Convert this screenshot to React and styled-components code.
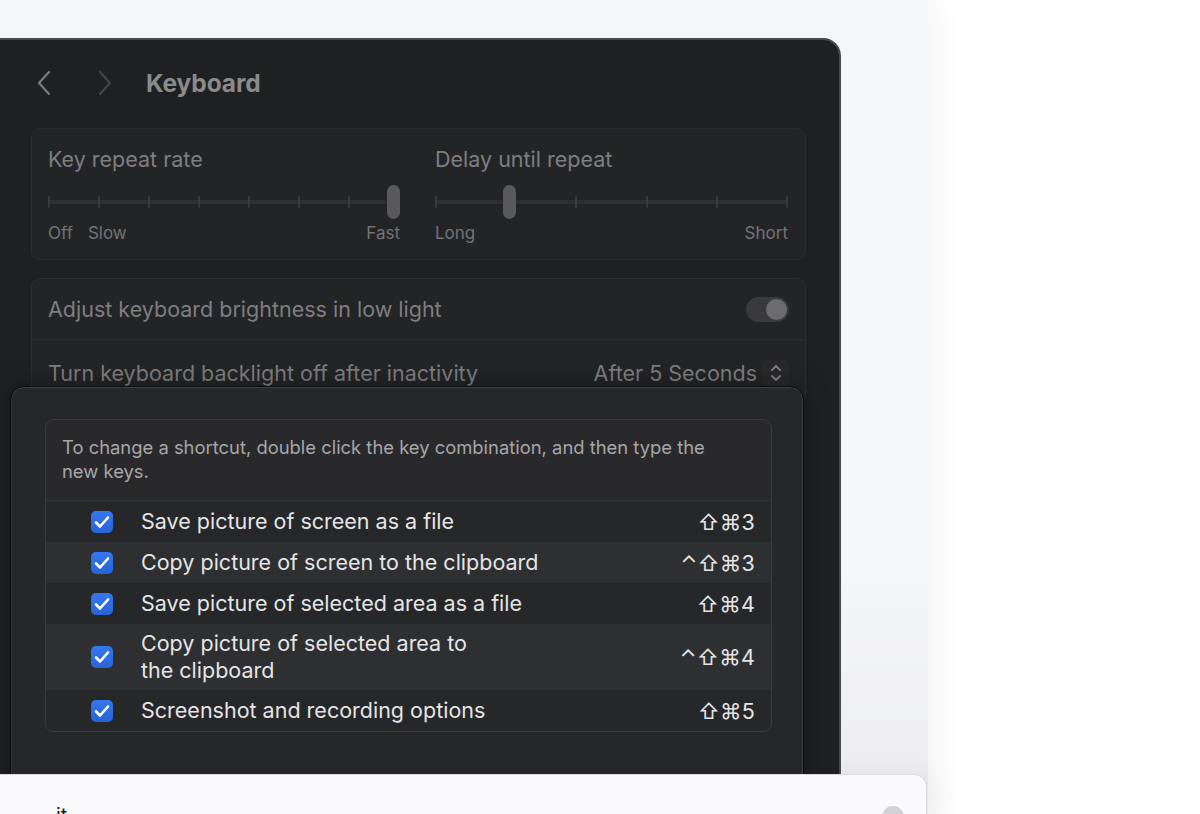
import React from "react";
import styled, { createGlobalStyle } from "styled-components";

const Global = createGlobalStyle`
  html, body { margin: 0; padding: 0; }
  body { width: 1200px; height: 814px; overflow: hidden; background: #ffffff;
    font-family: "Inter", "Noto Sans", "DejaVu Sans", sans-serif; }
  * { box-sizing: border-box; }
`;

const Page = styled.div`
  display: flex;
  width: 1200px;
  height: 814px;
  overflow: hidden;
`;

const LeftPane = styled.div`
  width: 928px;
  flex: none;
  background: linear-gradient(#f5f6f8 70%, #ececee 100%);
  display: flex;
  flex-direction: column;
  padding-top: 38px;
  box-shadow: 6px 0 30px rgba(0, 0, 0, 0.05);
  position: relative;
  z-index: 1;
`;

const RightPane = styled.div`
  flex: 1;
  background: #ffffff;
`;

const Window = styled.div`
  position: relative;
  margin-left: -20px;
  width: 861px;
  height: 736px;
  flex: none;
  background: #1f2022;
  border: 2px solid #48494b;
  border-bottom: none;
  border-radius: 18px 18px 0 0;
  overflow: hidden;
`;

const Toolbar = styled.div`
  display: flex;
  align-items: center;
  height: 88px;
  padding-left: 54px;
  padding-bottom: 2px;
`;

const NavButton = styled.div`
  width: 40px;
  height: 30px;
  display: flex;
  align-items: center;
  margin-right: 21px;
  svg { display: block; }
`;

const Title = styled.div`
  font-size: 24.5px;
  font-weight: 700;
  color: #8a8a8b;
  margin-left: -12px;
  letter-spacing: -0.1px;
`;

const Content = styled.div`
  display: flex;
  flex-direction: column;
  gap: 18px;
  padding: 0 33px 0 49px;
`;

const Group = styled.div`
  background: #232426;
  border: 1px solid #2b2c2e;
  border-radius: 9px;
`;

const SliderGrid = styled.div`
  display: grid;
  grid-template-columns: 352px 353px;
  column-gap: 35px;
  padding: 17px 16px 16px 16px;
`;

const SliderBlock = styled.div`
  display: flex;
  flex-direction: column;
`;

const GroupLabel = styled.div`
  font-size: 21.5px;
  line-height: 26px;
  color: #7e7e80;
`;

const SliderTrackArea = styled.div`
  position: relative;
  height: 40px;
  margin-top: 10px;
  display: flex;
  align-items: center;
`;

const Track = styled.div`
  position: absolute;
  left: 0;
  right: 0;
  top: 18px;
  height: 4px;
  border-radius: 2px;
  background: #2e2f31;
`;

const Ticks = styled.div`
  position: relative;
  width: 100%;
  display: flex;
  justify-content: space-between;
`;

const Tick = styled.span`
  width: 2px;
  height: 12px;
  border-radius: 1px;
  background: #3a3b3d;
`;

const Thumb = styled.div`
  position: absolute;
  top: 3px;
  width: 13px;
  height: 34px;
  border-radius: 7px;
  background: #59595b;
`;

const TickLabels = styled.div`
  display: flex;
  font-size: 17px;
  line-height: 20px;
  color: #737375;
  margin-top: 1px;
`;

const TickLabel = styled.span`
  margin-left: ${(p) => p.$gap || 0}px;
  margin-right: ${(p) => (p.$push ? "auto" : "0")};
`;

const Row = styled.div`
  display: flex;
  align-items: center;
  justify-content: space-between;
  height: ${(p) => p.$h}px;
  padding: 0 16px;
  border-top: ${(p) => (p.$sep ? "1px solid #2b2c2e" : "none")};
`;

const Toggle = styled.div`
  width: 43px;
  height: 25px;
  border-radius: 13px;
  background: #3a3a3c;
  position: relative;
  &::after {
    content: "";
    position: absolute;
    right: 2px;
    top: 2px;
    width: 21px;
    height: 21px;
    border-radius: 50%;
    background: #6c6c6e;
  }
`;

const PopupValue = styled.div`
  display: flex;
  align-items: center;
  gap: 5px;
  font-size: 21.5px;
  color: #7e7e80;
`;

const Stepper = styled.div`
  width: 27px;
  height: 26px;
  border-radius: 6px;
  background: #29292b;
  display: flex;
  align-items: center;
  justify-content: center;
`;

const Sheet = styled.div`
  position: absolute;
  left: 28px;
  top: 346px;
  width: 794px;
  height: 460px;
  background: #262729;
  border: 1px solid #0c0c0d;
  border-radius: 14px 14px 0 0;
  box-shadow: inset 0 1px 0 #404143, inset 1px 0 0 #333436, inset -1px 0 0 #3a3b3d,
    0 0 24px rgba(0, 0, 0, 0.35);
  padding: 32px 31px 0 34px;
`;

const ShortcutBox = styled.div`
  border: 1px solid #3a3b3d;
  border-radius: 9px;
  overflow: hidden;
  background: #29292b;
`;

const Hint = styled.div`
  font-size: 18.4px;
  line-height: 24px;
  color: #a6a6a8;
  padding: 15px 40px 17px 16px;
  border-bottom: 1px solid #333436;
`;

const ShortcutRow = styled.div`
  display: flex;
  align-items: center;
  height: ${(p) => (p.$tall ? 66 : 41)}px;
  padding: 0 16px 0 45px;
  background: ${(p) => (p.$alt ? "#2e2f31" : "#262729")};
`;

const Check = styled.div`
  width: 22px;
  height: 22px;
  flex: none;
  border-radius: 5px;
  background: linear-gradient(#3478f0, #2763d6);
  display: flex;
  align-items: center;
  justify-content: center;
  svg { display: block; }
`;

const ShortcutText = styled.div`
  flex: 1;
  margin-left: 28px;
  font-size: 21.5px;
  line-height: 27px;
  color: #e4e4e6;
`;

const Keys = styled.div`
  font-size: 21.5px;
  color: #e4e4e6;
  font-family: "Inter", "DejaVu Sans", sans-serif;
  letter-spacing: 0.2px;
`;

const BottomCard = styled.div`
  width: 928px;
  height: 60px;
  flex: none;
  margin-left: -1px;
  background: #fafafc;
  border: 1px solid #dcdcde;
  border-radius: 0 13px 0 0;
  display: flex;
  justify-content: space-between;
  padding: 28px 22px 0 56px;
  box-shadow: 10px 0 30px rgba(0, 0, 0, 0.05);
`;

const CardText = styled.div`
  font-size: 20px;
  line-height: 24px;
  color: #1d1d1f;
`;

const CardButton = styled.div`
  width: 22px;
  height: 22px;
  border-radius: 50%;
  background: #d3d3d5;
  margin-top: 3px;
`;

const Chevron = ({ dir, color }) => (
  <svg width="16" height="26" viewBox="0 0 16 26">
    <polyline
      points={dir === "left" ? "13,2 3,13 13,24" : "3,2 13,13 3,24"}
      fill="none"
      stroke={color}
      strokeWidth="2.2"
      strokeLinecap="round"
      strokeLinejoin="round"
    />
  </svg>
);

const CheckMark = () => (
  <svg width="16" height="14" viewBox="0 0 16 14">
    <polyline
      points="2,7.5 6,11.5 14,2.5"
      fill="none"
      stroke="#ffffff"
      strokeWidth="2.6"
      strokeLinecap="round"
      strokeLinejoin="round"
    />
  </svg>
);

const UpDown = () => (
  <svg width="12" height="20" viewBox="0 0 12 20">
    <polyline points="2,7 6,3 10,7" fill="none" stroke="#7e7e80" strokeWidth="1.8" strokeLinecap="round" strokeLinejoin="round" />
    <polyline points="2,13 6,17 10,13" fill="none" stroke="#7e7e80" strokeWidth="1.8" strokeLinecap="round" strokeLinejoin="round" />
  </svg>
);

const Slider = ({ count, index, width }) => (
  <SliderTrackArea>
    <Track />
    <Ticks>
      {Array.from({ length: count }).map((_, i) => (
        <Tick key={i} />
      ))}
    </Ticks>
    <Thumb style={{ left: (index / (count - 1)) * (width - 13) }} />
  </SliderTrackArea>
);

const shortcuts = [
  { text: "Save picture of screen as a file", keys: "⇧⌘3" },
  { text: "Copy picture of screen to the clipboard", keys: "⌃⇧⌘3", alt: true },
  { text: "Save picture of selected area as a file", keys: "⇧⌘4" },
  { text: ["Copy picture of selected area to", "the clipboard"], keys: "⌃⇧⌘4", alt: true, tall: true },
  { text: "Screenshot and recording options", keys: "⇧⌘5" },
];

export default function App() {
  return (
    <>
      <Global />
      <Page>
        <LeftPane>
          <Window>
            <Toolbar>
              <NavButton>
                <Chevron dir="left" color="#7a7a7c" />
              </NavButton>
              <NavButton>
                <Chevron dir="right" color="#444547" />
              </NavButton>
              <Title>Keyboard</Title>
            </Toolbar>
            <Content>
              <Group>
                <SliderGrid>
                  <SliderBlock>
                    <GroupLabel>Key repeat rate</GroupLabel>
                    <Slider count={8} index={7} width={352} />
                    <TickLabels>
                      <TickLabel>Off</TickLabel>
                      <TickLabel $gap={15} $push>Slow</TickLabel>
                      <TickLabel>Fast</TickLabel>
                    </TickLabels>
                  </SliderBlock>
                  <SliderBlock>
                    <GroupLabel>Delay until repeat</GroupLabel>
                    <Slider count={6} index={1} width={353} />
                    <TickLabels>
                      <TickLabel $push>Long</TickLabel>
                      <TickLabel>Short</TickLabel>
                    </TickLabels>
                  </SliderBlock>
                </SliderGrid>
              </Group>
              <Group>
                <Row $h={60}>
                  <GroupLabel>Adjust keyboard brightness in low light</GroupLabel>
                  <Toggle />
                </Row>
                <Row $h={66} $sep>
                  <GroupLabel>Turn keyboard backlight off after inactivity</GroupLabel>
                  <PopupValue>
                    After 5 Seconds
                    <Stepper>
                      <UpDown />
                    </Stepper>
                  </PopupValue>
                </Row>
              </Group>
            </Content>
            <Sheet>
              <ShortcutBox>
                <Hint>
                  To change a shortcut, double click the key combination, and then type the new keys.
                </Hint>
                {shortcuts.map((s, i) => (
                  <ShortcutRow key={i} $alt={s.alt} $tall={s.tall}>
                    <Check>
                      <CheckMark />
                    </Check>
                    <ShortcutText>
                      {Array.isArray(s.text) ? (
                        <>
                          {s.text[0]}
                          <br />
                          {s.text[1]}
                        </>
                      ) : (
                        s.text
                      )}
                    </ShortcutText>
                    <Keys>{s.keys}</Keys>
                  </ShortcutRow>
                ))}
              </ShortcutBox>
            </Sheet>
          </Window>
          <BottomCard>
            <CardText>it</CardText>
            <CardButton />
          </BottomCard>
        </LeftPane>
        <RightPane />
      </Page>
    </>
  );
}
